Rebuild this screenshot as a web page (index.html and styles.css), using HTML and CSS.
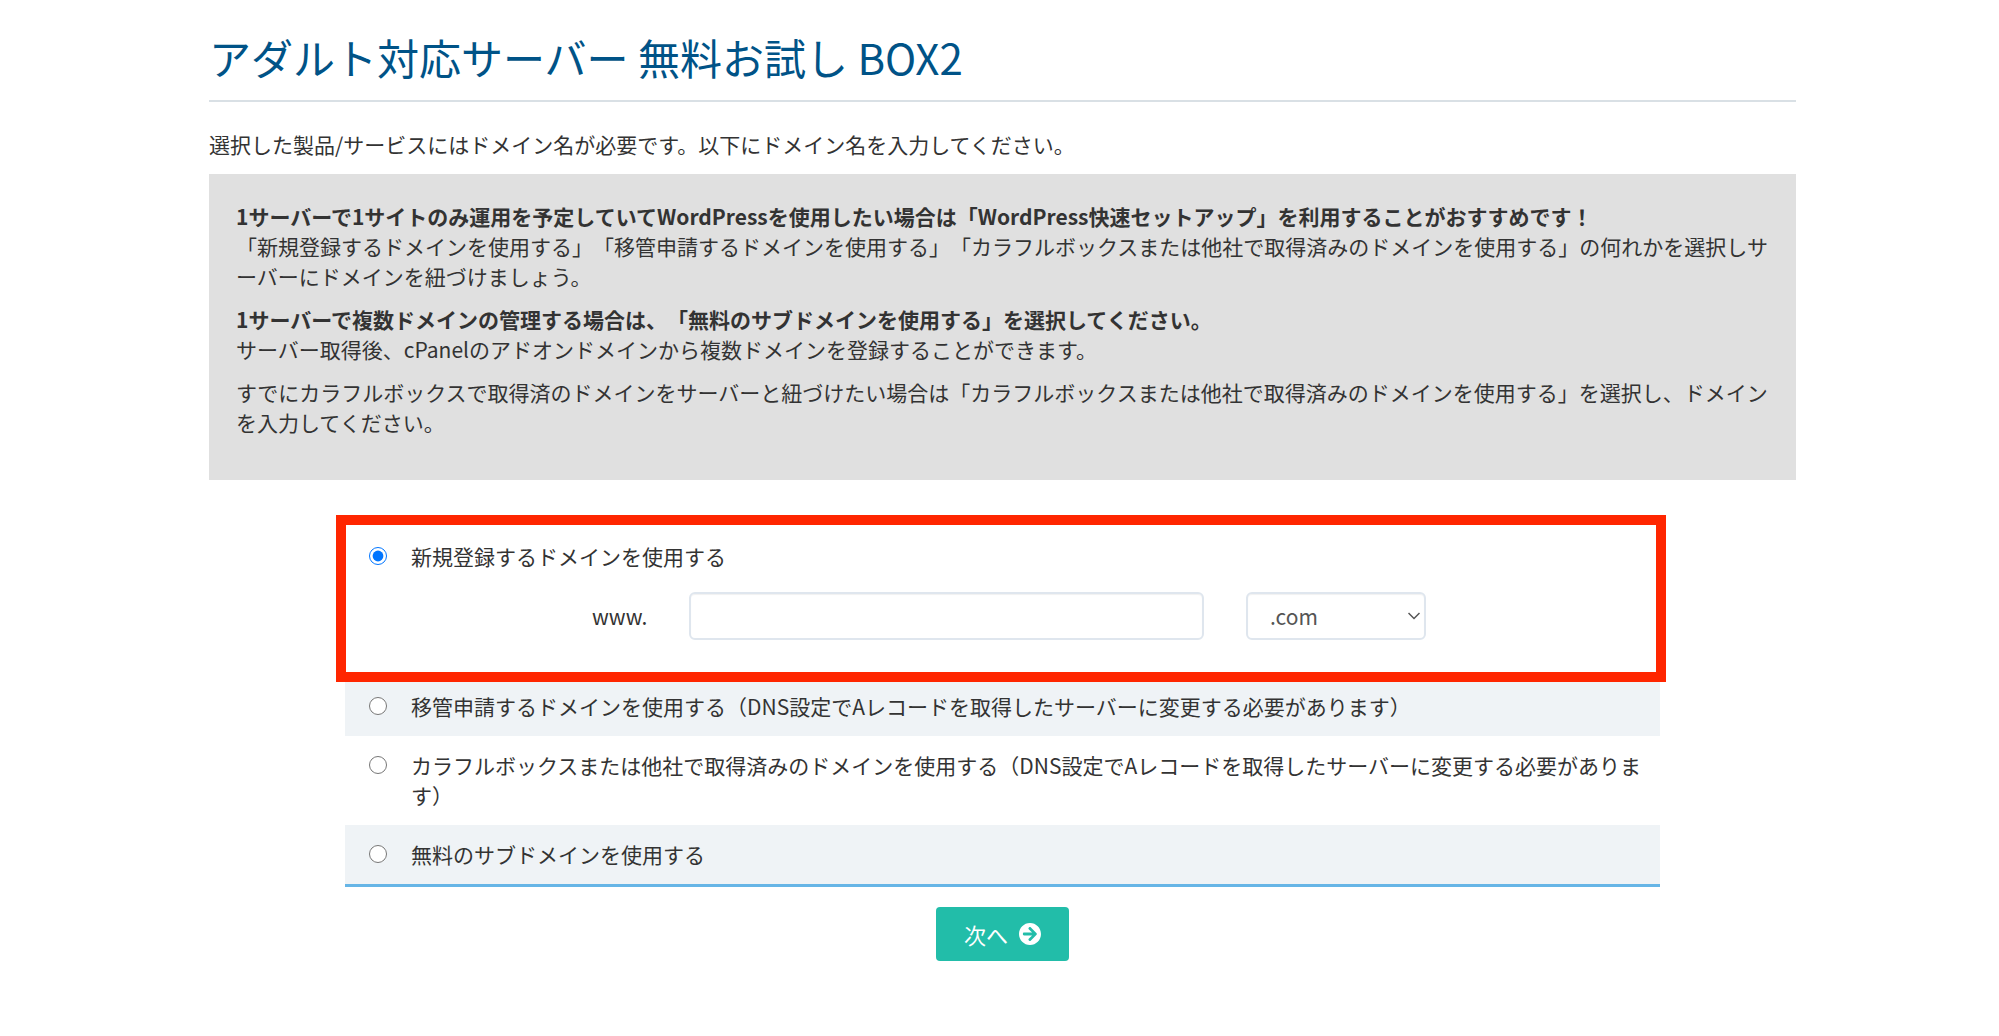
FILE: index.html
```html
<!DOCTYPE html>
<html lang="ja">
<head>
  <meta charset="UTF-8">
  <meta name="viewport" content="width=device-width, initial-scale=1.0">
  <title>アダルト対応サーバー 無料お試し BOX2</title>
  <link rel="stylesheet" href="styles.css">
</head>
<body>
  <main class="container">
    <h1>アダルト対応サーバー 無料お試し BOX2</h1>

    <p class="intro">選択した製品/サービスにはドメイン名が必要です。以下にドメイン名を入力してください。</p>

    <!-- 案内 -->
    <div class="notice">
      <p><strong>1サーバーで1サイトのみ運用を予定していてWordPressを使用したい場合は「WordPress快速セットアップ」を利用することがおすすめです！</strong><br>「新規登録するドメインを使用する」「移管申請するドメインを使用する」「カラフルボックスまたは他社で取得済みのドメインを使用する」の何れかを選択しサーバーにドメインを紐づけましょう。</p>
      <p><strong>1サーバーで複数ドメインの管理する場合は、「無料のサブドメインを使用する」を選択してください。</strong><br>サーバー取得後、cPanelのアドオンドメインから複数ドメインを登録することができます。</p>
      <p>すでにカラフルボックスで取得済のドメインをサーバーと紐づけたい場合は「カラフルボックスまたは他社で取得済みのドメインを使用する」を選択し、ドメインを入力してください。</p>
    </div>

    <!-- ドメイン選択 -->
    <form>
      <div class="domain-options">
        <div class="option highlight">
          <div class="option-label">
            <input type="radio" name="domain" id="register" value="register" checked>
            <label for="register">新規登録するドメインを使用する</label>
          </div>
          <div class="domain-input">
            <label for="sld">www.</label>
            <input type="text" id="sld" name="sld">
            <div class="select-wrap">
              <select id="tld" name="tld" aria-label="TLD">
                <option>.com</option>
                <option>.net</option>
                <option>.jp</option>
              </select>
              <svg class="chevron" viewBox="0 0 12 8" aria-hidden="true"><path d="M.5 1l5.500 5.500L11.500 1"/></svg>
            </div>
          </div>
        </div>
        <div class="option">
          <div class="option-label">
            <input type="radio" name="domain" id="transfer" value="transfer">
            <label for="transfer">移管申請するドメインを使用する（DNS設定でAレコードを取得したサーバーに変更する必要があります）</label>
          </div>
        </div>
        <div class="option">
          <div class="option-label">
            <input type="radio" name="domain" id="own" value="own">
            <label for="own">カラフルボックスまたは他社で取得済みのドメインを使用する（DNS設定でAレコードを取得したサーバーに変更する必要があります）</label>
          </div>
        </div>
        <div class="option">
          <div class="option-label">
            <input type="radio" name="domain" id="subdomain" value="subdomain">
            <label for="subdomain">無料のサブドメインを使用する</label>
          </div>
        </div>
      </div>

      <div class="buttons">
        <button type="button">次へ
          <svg viewBox="8 8 496 496" aria-hidden="true"><path d="M256 8c137 0 248 111 248 248S393 504 256 504 8 393 8 256 119 8 256 8zm-28.900 143.600l75.500 72.400H120c-13.300 0-24 10.700-24 24v16c0 13.300 10.700 24 24 24h182.600l-75.500 72.400c-9.700 9.300-9.900 24.800-.4 34.300l11 10.900c9.400 9.400 24.600 9.400 33.900 0L404.300 273c9.400-9.400 9.400-24.600 0-33.900L271.600 106.300c-9.400-9.400-24.600-9.400-33.900 0l-11 10.900c-9.500 9.600-9.300 25.100.4 34.400z"/></svg>
        </button>
      </div>
    </form>
  </main>
</body>
</html>
```

FILE: styles.css
```css
* {
  box-sizing: border-box;
}

body {
  margin: 0;
  background-color: #fff;
  color: #333;
  font-family: "Noto Sans CJK JP", sans-serif;
  font-size: 21px;
  line-height: 30px;
  text-spacing-trim: space-all;
}

.container {
  padding: 28px 203px 40px 209px;
}

h1 {
  margin: 0;
  padding-bottom: 14px;
  border-bottom: 2px solid #d9e0e5;
  color: #005387;
  font-size: 42px;
  font-weight: 400;
  line-height: 58px;
}

.intro {
  margin: 27px 0 15px;
}

.notice {
  padding: 27px 27px 30px;
  background-color: #e0e0e0;
}

.notice p {
  margin: 0 0 13px;
}

.domain-options {
  margin: 47px 136px 0;
  border-bottom: 3px solid #66b5e6;
}

.option {
  position: relative;
  padding: 14px 12px 15px 24px;
}

.option:nth-child(even) {
  background-color: #eff3f6;
}

.option-label {
  display: flex;
  align-items: flex-start;
  gap: 24px;
}

.option-label input {
  flex: none;
  width: 18px;
  height: 18px;
  margin: 6px 0;
}

/* 選択中の項目を囲む赤枠 */
.highlight::after {
  content: "";
  position: absolute;
  z-index: 1;
  inset: -12px -6px -5px -9px;
  border: 10px solid #ff2600;
  pointer-events: none;
}

.domain-input {
  display: flex;
  align-items: center;
  gap: 42px;
  padding: 21px 222px 22px 223px;
}

.domain-input input,
.domain-input select {
  height: 48px;
  border: 2px solid #dfe6ee;
  border-radius: 6px;
  background-color: #fff;
  box-shadow: inset 0 1px 1px rgba(0, 0, 0, 0.06);
  color: #555;
  font: inherit;
}

.domain-input input {
  flex: 1;
  min-width: 0;
  padding: 0 20px;
}

.select-wrap {
  position: relative;
  width: 180px;
}

.domain-input select {
  display: block;
  width: 100%;
  padding: 0 22px;
  appearance: none;
}

.chevron {
  position: absolute;
  top: 20px;
  right: 6px;
  width: 12px;
  height: 8px;
  fill: none;
  stroke: #555;
  stroke-width: 1.5;
  pointer-events: none;
}

.buttons {
  margin-top: 20px;
  text-align: center;
}

button {
  display: inline-flex;
  align-items: center;
  gap: 11px;
  height: 54px;
  padding: 0 28px;
  border: none;
  border-radius: 4px;
  background-color: #22bda9;
  color: #fff;
  font: inherit;
  font-size: 22px;
  cursor: pointer;
}

button svg {
  width: 22px;
  height: 22px;
  fill: currentColor;
}
```
